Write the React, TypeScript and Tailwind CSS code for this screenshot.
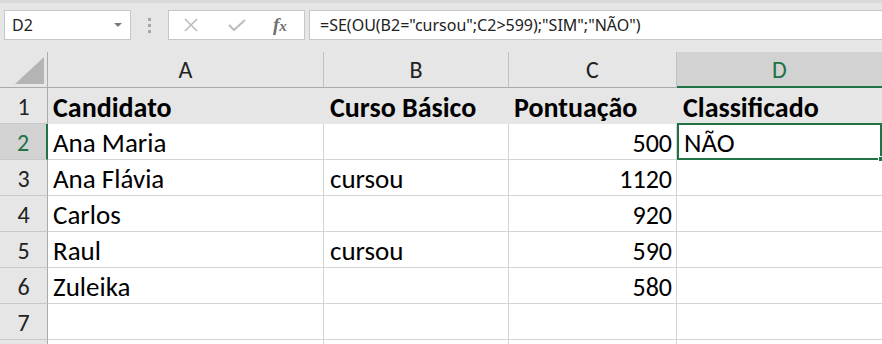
import React from "react";

const COLS = ["A", "B", "C", "D"];

const rows: { n: number; a: string; b: string; c: string; d: string; bold?: boolean }[] = [
  { n: 1, a: "Candidato", b: "Curso Básico", c: "Pontuação", d: "Classificado", bold: true },
  { n: 2, a: "Ana Maria", b: "", c: "500", d: "NÃO" },
  { n: 3, a: "Ana Flávia", b: "cursou", c: "1120", d: "" },
  { n: 4, a: "Carlos", b: "", c: "920", d: "" },
  { n: 5, a: "Raul", b: "cursou", c: "590", d: "" },
  { n: 6, a: "Zuleika", b: "", c: "580", d: "" },
  { n: 7, a: "", b: "", c: "", d: "" },
  { n: 8, a: "", b: "", c: "", d: "" },
];

const cellFont = { fontFamily: "Carlito, Calibri, Lato, 'Noto Sans', sans-serif" };

const Toolbar = () => (
  <div className="flex h-[52px] items-start border-t-[3px] border-[#dadada] pl-[4px] pt-[7px]">
    <div className="flex h-[30px] w-[127px] items-center justify-between border border-[#c6c6c6] bg-white pl-[7px] pr-[8px]">
      <span className="text-[16px] text-[#222]" style={{ fontFamily: "'Noto Sans', sans-serif" }}>
        D2
      </span>
      <span className="h-0 w-0 border-x-[4px] border-t-[4px] border-x-transparent border-t-[#7a7a7a]" />
    </div>
    <div className="flex w-[37px] flex-col items-center justify-center gap-[3px] self-stretch pb-[12px]">
      <span className="h-[3px] w-[3px] bg-[#a6a6a6]" />
      <span className="h-[3px] w-[3px] bg-[#a6a6a6]" />
      <span className="h-[3px] w-[3px] bg-[#a6a6a6]" />
    </div>
    <div className="flex h-[30px] w-[137px] items-center border border-[#c6c6c6] bg-white">
      <svg className="ml-[14px]" width="16" height="16" viewBox="0 0 16 16">
        <path d="M2 2 L14 14 M14 2 L2 14" stroke="#bdbdbd" strokeWidth="1.6" />
      </svg>
      <svg className="ml-[28px]" width="20" height="16" viewBox="0 0 20 16">
        <path d="M2 8 L7 13 L18 3" stroke="#bdbdbd" strokeWidth="2.2" fill="none" />
      </svg>
      <span
        className="ml-[26px] text-[19px] font-bold italic text-[#6f6f6f]"
        style={{ fontFamily: "'Liberation Serif', serif" }}
      >
        f<span className="text-[15px]">x</span>
      </span>
    </div>
    <div className="ml-[4px] flex h-[30px] flex-1 items-center border border-r-0 border-[#c6c6c6] bg-white pl-[10px]">
      <span className="text-[16px] text-[#222]" style={{ fontFamily: "'Noto Sans', sans-serif" }}>
        =SE(OU(B2="cursou";C2&gt;599);"SIM";"NÃO")
      </span>
    </div>
  </div>
);

const App = () => {
  return (
    <div className="relative h-[344px] w-[882px] overflow-hidden bg-[#e6e6e6]" style={cellFont}>
      <Toolbar />
      <div className="grid grid-cols-[48px_276px_185px_168px_205px] grid-rows-[36px_repeat(8,36px)]">
        {/* corner */}
        <div className="flex items-end justify-end border-r border-b border-[#ababab] pb-[3px] pr-[3px]">
          <span className="h-0 w-0 border-b-[27px] border-l-[29px] border-b-[#b4b4b4] border-l-transparent" />
        </div>
        {COLS.map((c) => (
          <div
            key={c}
            className={
              c === "D"
                ? "flex items-center justify-center border-b-2 border-b-[#217346] bg-[#d2d2d2] pt-[1px] text-[24px] text-[#217346]"
                : "flex items-center justify-center border-r border-b border-r-[#c0c0c0] border-b-[#ababab] pt-[1px] text-[24px] text-[#222]"
            }
          >
            {c}
          </div>
        ))}
        {rows.map((r) => (
          <React.Fragment key={r.n}>
            <div
              className={
                r.n === 2
                  ? "flex items-center justify-center border-r-2 border-b border-r-[#217346] border-b-[#c8c8c8] bg-[#d2d2d2] pt-[3px] text-[24px] text-[#217346]"
                  : "flex items-center justify-center border-r border-b border-r-[#ababab] border-b-[#c8c8c8] pt-[3px] text-[24px] text-[#222]"
              }
            >
              {r.n < 8 ? r.n : ""}
            </div>
            {r.bold ? (
              <>
                <div className="flex items-center bg-[#e7e6e6] pl-[5px] pt-[3px] text-[28px] font-bold text-black">{r.a}</div>
                <div className="flex items-center bg-[#e7e6e6] pl-[6px] pt-[3px] text-[28px] font-bold text-black">{r.b}</div>
                <div className="flex items-center bg-[#e7e6e6] pl-[5px] pt-[3px] text-[28px] font-bold text-black">{r.c}</div>
                <div className="flex items-center bg-[#e7e6e6] pl-[6px] pt-[3px] text-[28px] font-bold text-black">{r.d}</div>
              </>
            ) : (
              <>
                <div className="flex items-center border-r border-b border-[#d4d4d4] bg-white pl-[5px] pt-[3px] text-[27px] text-black">
                  {r.a}
                </div>
                <div className="flex items-center border-r border-b border-[#d4d4d4] bg-white pl-[6px] pt-[3px] text-[27px] text-black">
                  {r.b}
                </div>
                <div className="flex items-center justify-end border-r border-b border-[#d4d4d4] bg-white pr-[4px] pt-[3px] text-[26px] text-black">
                  {r.c}
                </div>
                {r.n === 2 ? (
                  <div className="relative -mt-[1px] flex items-center border-2 border-[#217346] bg-white pl-[5px] pt-[3px] text-[27px] text-black">
                    {r.d}
                    <span className="absolute -bottom-[4px] -right-[4px] h-[6px] w-[6px] border border-white bg-[#217346]" />
                  </div>
                ) : (
                  <div className="flex items-center border-b border-[#d4d4d4] bg-white pl-[6px] pt-[3px] text-[27px] text-black">
                    {r.d}
                  </div>
                )}
              </>
            )}
          </React.Fragment>
        ))}
      </div>
    </div>
  );
};

export default App;
